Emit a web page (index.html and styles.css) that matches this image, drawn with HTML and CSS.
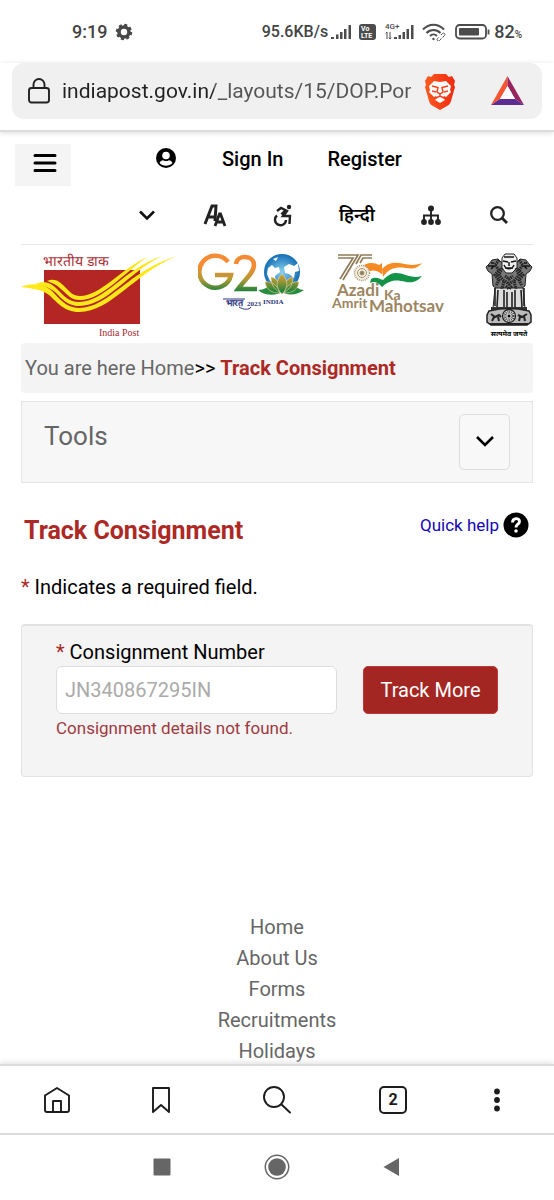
FILE: index.html
```
<!DOCTYPE html>
<html lang="en">
<head>
<meta charset="utf-8">
<meta name="viewport" content="width=device-width, initial-scale=1">
<title>Track Consignment</title>
<link rel="stylesheet" href="styles.css">
</head>
<body>
<div class="status-bar">
  <span>9:19</span>
  <svg class="status-gear" width="18" height="18" viewBox="0 0 18 18"><circle cx="9" cy="9" r="5" fill="none" stroke="#484848" stroke-width="3.6"/><circle cx="9" cy="9" r="7" fill="none" stroke="#484848" stroke-width="2.4" stroke-dasharray="3 2.5"/></svg>
  <span class="status-speed">95.6KB/s</span>
  <svg class="status-signal" width="22" height="16" viewBox="0 0 22 16" fill="#4c4c4c"><path d="M0 13h3v2H0zM5 10.500h2.500V15H5zM9 8h2.500v7H9zM13 5h2.500v10H13zM17.500 1H20v14h-2.500z"/></svg>
  <svg class="status-volte" width="18" height="16" viewBox="0 0 18 16"><rect width="17" height="16" rx="3" fill="#4c4c4c"/><text x="2" y="7" class="volte-text">Vo</text><text x="2" y="14" class="volte-text">LTE</text></svg>
  <svg width="31" height="18" viewBox="0 0 31 18" fill="#4c4c4c"><text x="0" y="6" class="net-text">4G+</text><path d="M2 9v7M.700 10.300 2 9M5 9v7M3.800 14.700 5 16l1.300-1.300" stroke="#4c4c4c" fill="none"/><path d="M9 14h3v2H9zM13.500 12H16v4h-2.500zM17.500 9H20v7h-2.500zM21.500 6H24v10h-2.500zM26 2h2.500v14H26z"/></svg>
  <svg class="status-wifi" width="25" height="18" viewBox="0 0 25 18" fill="none" stroke="#4c4c4c" stroke-width="2"><path d="M1 6.500C7 0 16 0 22 6.500M4.500 10c4-4 10-4 14 0M8 13c2-2 5-2 7 0"/><circle cx="11.500" cy="16" r="1.200" fill="#4c4c4c" stroke="none"/><path d="m16.500 14.500-1 1a1.300 1.300 0 0 0 2 2l2-2M19 12l1.500-1.500a1.300 1.300 0 0 1 2 2l-2 2" stroke-width="1"/></svg>
  <svg width="36" height="16" viewBox="0 0 36 16"><rect x="1" y="1" width="30" height="13.500" rx="3.500" fill="none" stroke="#4c4c4c" stroke-width="1.800"/><rect x="4" y="4" width="20" height="7.500" rx="1" fill="#4c4c4c"/><path d="M33.500 5.500v5" stroke="#4c4c4c" stroke-width="1.800"/></svg>
  <span class="status-battery">82<small>%</small></span>
</div>

<div class="browser-bar">
  <div class="address">
    <svg width="22" height="26" viewBox="0 0 22 26" fill="none" stroke="#222" stroke-width="1.900"><rect x="1" y="10" width="20" height="14.500" rx="2.500"/><path d="M5.500 10V6.500a5.500 5.500 0 0 1 11 0V10"/></svg>
    <input class="address-input" type="text" aria-label="Address" value="indiapost.gov.in/_layouts/15/DOP.Por">
    <button class="icon-button" type="button" aria-label="Brave Shields">
      <svg width="32" height="37" viewBox="0 0 32 37"><defs><linearGradient id="lion" x1="0" x2="1"><stop offset="0" stop-color="#ff5a1e"/><stop offset="1" stop-color="#f02a12"/></linearGradient></defs><path fill="url(#lion)" d="m10 1-3 3-3-1-3 5 1 4-1 2 4 14c1 3 2 4 4 5l7 4 7-4c2-1 3-2 4-5l4-14-1-2 1-4-3-5-3 1-3-3z"/><path fill="#fff" d="m10 8 6 1 6-1 5 5-1 4 1 2-5 5-2-1-1 2 2 2-5 3-5-3 2-2-1-2-2 1-5-5 1-2-1-4z"/><path fill="none" stroke="#f9401a" stroke-width="1.500" d="m8 13 6 1.500-1 4.500 3 2 3-2-1-4.500 6-1.500M8 18l4 1M24 18l-4 1M16 21v3M12 25l4-2 4 2"/></svg>
    </button>
    <button class="icon-button" type="button" aria-label="Brave Rewards">
      <svg width="33" height="30" viewBox="0 0 33 30"><path fill="#fa5532" d="M16.500 0 0 29l9-6 7.500-13z"/><path fill="#97235f" d="m16.500 0 16.500 29-9-6-7.500-13z"/><path fill="#5b2d93" d="M0 29h33l-9-6H9z"/><path fill="#fff" d="m16.500 10 7.500 13H9z"/></svg>
    </button>
  </div>
</div>

<div class="page">
  <header class="site-header">
    <button class="menu-button" type="button" aria-label="Menu"><svg width="24" height="20" viewBox="0 0 24 20"><path d="M2 2.500h20M2 10h20M2 17.500h20" stroke="#000" stroke-width="3" stroke-linecap="round"/></svg></button>
    <div class="header-rows">
      <nav class="account-row" aria-label="Account">
        <svg width="24" height="24" viewBox="0 0 24 24"><circle cx="12" cy="11" r="10"/><circle cx="12" cy="8.500" r="3.800" fill="#fff"/><path fill="#fff" d="M5.500 16c1-2 3-3 4-2.500 2 .700 3 .700 5 0 1-.500 3 .500 4 2.500-3.500 3.600-9.500 3.600-13 0z"/></svg>
        <a href="#">Sign In</a>
        <a href="#">Register</a>
      </nav>
      <nav class="tool-row" aria-label="Page tools">
        <button class="icon-button" type="button" aria-label="More"><svg width="24" height="24" viewBox="0 0 24 24"><path d="m5 8.500 7 7 7-7" fill="none" stroke="#111" stroke-width="2.600"/></svg></button>
        <button class="icon-button" type="button" aria-label="Text size"><svg width="24" height="24" viewBox="0 0 24 24" fill="none" stroke="#222" stroke-width="3"><path d="M2 21 9 3h4l-1 15M6 14h6"/><path d="m12 23 4.500-12h1L22 23M14 19h7" stroke-width="2.800"/></svg></button>
        <button class="icon-button" type="button" aria-label="Accessibility"><svg width="24" height="24" viewBox="0 0 24 24" fill="none" stroke="#222" stroke-width="2.400"><circle cx="18" cy="4" r="2.200" fill="#222" stroke="none"/><path d="m6 8 4-3 6 3-4 5h7l-.500 8"/><path d="M6 12.500a5.500 5.500 0 1 0 9 4.500"/><path d="m15 8-4 4" stroke-width="4"/></svg></button>
        <a class="language" href="#" lang="hi">हिन्दी</a>
        <button class="icon-button" type="button" aria-label="Sitemap"><svg width="24" height="24" viewBox="0 0 24 24" fill="#222"><circle cx="12" cy="5.500" r="3"/><circle cx="5" cy="19" r="2.900"/><circle cx="12" cy="19" r="2.900"/><circle cx="19" cy="19" r="2.900"/><path d="M12 6v12M5 18v-5.500h14V18" fill="none" stroke="#222" stroke-width="1.900"/></svg></button>
        <button class="icon-button" type="button" aria-label="Search"><svg width="24" height="24" viewBox="0 0 24 24" fill="none" stroke="#222" stroke-width="2.300"><circle cx="10.500" cy="10.500" r="6.300"/><path d="m15 15 5 5" stroke-width="2.900"/></svg></button>
      </nav>
    </div>
  </header>

  <main class="content">
    <div class="logos">
      <svg width="157" height="90" viewBox="0 0 157 90" role="img" aria-label="India Post">
        <path fill="#b32623" d="M23 20h96v54H23z"/>
        <text class="post-hindi" x="22" y="16" lang="hi">भारतीय डाक</text>
        <text class="post-name" x="78" y="86">India Post</text>
        <g fill="#ffe81a"><path d="M0 37C10 33 22 33 30 40c8 8 15 18 28 18 30 0 50-38 98-52-44 18-66 56-98 56-15 0-22-10-30-17-8-6-20-7-28-8z"/><path d="M14 34c10-4 16-1 22 5 7 7 12 13 22 13 26 0 46-34 83-46-33 16-55 50-83 50-11 0-17-7-24-14-7-6-14-6-20-8z"/><path d="M26 31c8-3 12 0 18 6 5 5 8 9 15 9 21 0 41-28 68-39-23 14-45 43-68 43-9 0-12-5-18-10-6-6-10-7-15-9z"/></g>
      </svg>
      <svg width="114" height="90" viewBox="0 0 114 90" role="img" aria-label="G20 Bharat 2023 India">
        <defs><linearGradient id="tri" gradientUnits="userSpaceOnUse" x1="0" y1="5" x2="0" y2="42"><stop offset=".3" stop-color="#f58b32"/><stop offset=".65" stop-color="#b59a35"/><stop offset="1" stop-color="#16813c"/></linearGradient><radialGradient id="globe"><stop offset="0" stop-color="#8bd1f0"/><stop offset="1" stop-color="#136fb5"/></radialGradient></defs>
        <g fill="none" stroke="url(#tri)" stroke-width="4.500"><path d="M30 12A16 16 0 1 0 33 25H17"/><path d="M38 14C39 4 56 5 56 15c0 8-9 14-16 24h19"/></g>
        <circle cx="84" cy="22" r="18" fill="url(#globe)"/>
        <path fill="#fff" d="m70 18 4-3 3 3 4-1 1 5-5 4 1 8-6-3-3-7zM86 17l5-3 5 2 4-3 1 8-4 1-1 6-5-4-4-1zM75 9l5-2-2 4z"/>
        <path fill="#278c3d" d="M60 40c7 0 10-4 13-4l11 8 11-8c3 0 6 4 11 4-8 6-18 5-22 2-6 4-17 4-24-2z"/>
        <g fill="url(#tri)" stroke="#f1d9a6" stroke-width=".6"><path d="M67 32c6-1 12 2 15 11-8 0-14-3-15-11zM101 32c-6-1-12 2-15 11 8 0 14-3 15-11zM73 27c6 1 10 7 11 16-7-2-11-8-11-16zM95 27c-6 1-10 7-11 16 7-2 11-8 11-16z"/><path d="M84 24c7 7 6 14 0 20-6-6-7-13 0-20z"/></g>
        <text class="g20-hindi" x="28" y="56" lang="hi">भारत</text>
        <path d="M25 49h22M41 57c5 3 10 3 12 0" fill="none" stroke="#28357d"/>
        <text class="g20-text" x="49" y="56">2023</text><text class="g20-text" x="65" y="54">INDIA</text>
      </svg>
      <svg width="133" height="90" viewBox="0 0 133 90" role="img" aria-label="75 Azadi Ka Amrit Mahotsav">
        <g fill="none" stroke="#8f7b58" stroke-width="1.700"><path d="M6 5h20L11 30M6 8h15L8 29M40 5H29l-5 9M40 8h-9l-3 5"/></g>
        <path fill="#f68b24" d="M32 15c6-3 11-2 15 0l3-2v12c-4-5-9-5-12-4zM50 19c14-14 23 1 40-6-5 6-10 6-16 5-9-1-16-1-23 9z"/>
        <path fill="#fff" d="m38 21 12 3V33l-11-4z"/>
        <path fill="#139347" d="M39 29c5-3 9 0 12 1 15-16 23 1 39-4-5 6-10 7-16 6-9-2-15-3-24 5-4-5-8-6-12-4z"/>
        <g fill="#f6f0e1" stroke="#a39373"><circle cx="30" cy="23" r="7.500" stroke-dasharray="1 1" stroke-width="1.500"/><circle cx="30" cy="23" r="4.500"/><circle cx="30" cy="23" r="2" fill="#8f7b58"/></g>
        <text class="azadi" x="5" y="46">Azadi</text><text class="azadi azadi-small" x="52" y="50">Ka</text><text class="azadi azadi-small" x="0" y="58">Amrit</text><text class="azadi" x="37" y="62">Mahotsav</text>
      </svg>
      <svg width="48" height="90" viewBox="0 0 48 90" role="img" aria-label="State Emblem of India">
        <g fill="#777" stroke="#222"><path d="m16 12-3-3-6 1-3 4-3 3 2 4 4 3 1 12 8 6h16l8-6 1-12 4-3 2-4-3-3-3-4-6-1-3 3z"/><path fill="#eee" d="m17 8 3-4h9l3 4v10l-5 5h-6l-4-5z"/><path fill="#ddd" d="M10 38h28l2 20H8z"/></g>
        <path d="m14 10-4 5 4 5-4 5 4 5-3 6M34 10l4 5-4 5 4 5-4 5 3 6M17 18l-3 7 5 6-2 8M31 18l3 7-5 6 2 8M20 26l4 3 4-3M20 31l4 3 4-3M21 36l3 3 3-3" fill="none" stroke="#222" stroke-width="3" stroke-dasharray="1.500 .8"/>
        <path d="M19 7h10M18 11l5 1M26 12l5-1M24 12v4M20 18h8M19 15c2 5 8 5 10 0M3 16h6l-3 3M45 16h-6l3 3M6 13h3M42 13h-3" stroke="#151515" fill="none" stroke-width="1.500"/>
        <path d="M10 38v18M13 40l-1 17M19 40v17M22 42v15M27 42v15M30 40v17M36 40l1 17M39 38v18" stroke="#222" fill="none" stroke-width="1.600"/>
        <path d="M6 57h36v3H6z" fill="#333"/><path d="M4 61q20-5 40 0l2 4v7l-4 3H6l-4-3v-7z" fill="#bbb" stroke="#222" stroke-width="1.500"/>
        <circle cx="24" cy="66" r="6.500" fill="#ddd" stroke="#222" stroke-width="1.300"/><circle cx="24" cy="66" r="4" fill="none" stroke="#333" stroke-width="3" stroke-dasharray=".7 1"/><circle cx="24" cy="66" r="1.500"/>
        <path d="m6 64 4 3 4-2 2 2M7 71l2-4M14 71l-1-4M33 65l4 2 5-3M34 71l1-4M40 71l-1-5M5 74h38" stroke="#222" stroke-width="2" fill="none"/>
        <text class="emblem-text" x="24" y="86" text-anchor="middle" lang="hi">सत्यमेव जयते</text>
      </svg>
    </div>

    <nav class="breadcrumb" aria-label="Breadcrumb">You are here <a href="#">Home</a><span class="separator">&gt;&gt;</span> <strong>Track Consignment</strong></nav>

    <section class="tools">
      <h2>Tools</h2>
      <button class="tools-toggle" type="button" aria-label="Expand tools"><svg width="24" height="24" viewBox="0 0 24 24"><path d="m4 7 8 8 8-8" fill="none" stroke="#000" stroke-width="2.600"/></svg></button>
    </section>

    <div class="title-row">
      <h1>Track Consignment</h1>
      <a class="help" href="#">Quick help<svg width="26" height="26" viewBox="0 0 26 26" aria-hidden="true"><circle cx="13" cy="13" r="12.500" fill="#000"/><path d="M9.500 10.500c0-5 7-5 7-1 0 3-3.500 2.500-3.500 6" fill="none" stroke="#fff" stroke-width="2.900"/><circle cx="13" cy="19" r="1.800" fill="#fff"/></svg></a>
    </div>
    <p class="required-note"><span class="star">*</span> Indicates a required field.</p>

    <form class="track-form">
      <label for="consignment"><span class="star">*</span> Consignment Number</label>
      <div class="track-row">
        <input id="consignment" type="text" placeholder="JN340867295IN">
        <button type="button">Track More</button>
      </div>
      <p class="error">Consignment details not found.</p>
    </form>

    <nav class="footer-links" aria-label="Footer">
      <a href="#">Home</a>
      <a href="#">About Us</a>
      <a href="#">Forms</a>
      <a href="#">Recruitments</a>
      <a href="#">Holidays</a>
    </nav>
  </main>
</div>

<nav class="bottom-bar" aria-label="Browser">
  <button class="icon-button" type="button" aria-label="Home"><svg width="28" height="28" viewBox="0 0 28 28" fill="none" stroke="#1c1c1c" stroke-width="1.900" stroke-linejoin="round"><path d="M2 9.500 14 2l12 7.500V24a2 2 0 0 1-2 2H4a2 2 0 0 1-2-2z"/><path d="M10 26V15h8v11"/></svg></button>
  <button class="icon-button" type="button" aria-label="Bookmarks"><svg width="28" height="28" viewBox="0 0 28 28" fill="none" stroke="#1c1c1c" stroke-width="1.900" stroke-linejoin="round"><path d="M6 2h16v24l-8-7-8 7z"/></svg></button>
  <button class="icon-button" type="button" aria-label="Search"><svg width="30" height="30" viewBox="0 0 30 30" fill="none" stroke="#1c1c1c" stroke-width="1.900" stroke-linecap="round"><circle cx="12" cy="12" r="10"/><path d="m19.500 19.500 8.500 8"/></svg></button>
  <button class="tab-count" type="button" aria-label="2 open tabs">2</button>
  <button class="icon-button" type="button" aria-label="More options"><svg width="28" height="28" viewBox="0 0 28 28" fill="#1c1c1c"><circle cx="14" cy="5.500" r="2.900"/><circle cx="14" cy="14" r="2.900"/><circle cx="14" cy="22.500" r="2.900"/></svg></button>
</nav>
<nav class="system-bar" aria-label="System">
  <button class="icon-button" type="button" aria-label="Recent apps"><svg width="26" height="26" viewBox="0 0 26 26"><rect x="4.500" y="4.500" width="17" height="17" rx="1" fill="#666"/></svg></button>
  <button class="icon-button" type="button" aria-label="Home screen"><svg width="26" height="26" viewBox="0 0 26 26"><circle cx="13" cy="13" r="11.700" fill="none" stroke="#666" stroke-width="1.500"/><circle cx="13" cy="13" r="8.800" fill="#666"/></svg></button>
  <button class="icon-button" type="button" aria-label="Back"><svg width="26" height="26" viewBox="0 0 26 26"><path d="M20 4v18L4.500 13z" fill="#666"/></svg></button>
</nav>
</body>
</html>
```
FILE: styles.css
```
* {
  box-sizing: border-box;
}

body {
  display: flex;
  flex-direction: column;
  height: 100vh;
  margin: 0;
  background: #fff;
  color: #000;
  font-family: Roboto, "Noto Sans", sans-serif;
  font-size: 18px;
  line-height: 24px;
}

a {
  color: inherit;
  text-decoration: none;
}

button,
input {
  font: inherit;
}

svg {
  display: block;
  flex: none;
}

h1,
h2,
p {
  margin: 0;
}

.icon-button {
  display: flex;
  flex: none;
  align-items: center;
  justify-content: center;
  padding: 0;
  border: 0;
  background: none;
}

.status-bar {
  display: flex;
  flex: none;
  align-items: center;
  padding: 20px 32px 19px 72px;
  color: #444;
  font-weight: 500;
}

.status-gear {
  margin-left: 8px;
}

.status-speed {
  margin-left: auto;
  font-size: 16px;
}

.status-signal {
  margin: 0 6px 0 3px;
}

.status-volte {
  margin-right: 8px;
}

.status-wifi {
  margin: 0 8px 0 6px;
}

.status-battery {
  margin-left: 3px;
}

.status-battery small {
  font-size: 10px;
  line-height: 10px;
}

.volte-text {
  fill: #fff;
  font-size: 7px;
  font-weight: 700;
}

.net-text {
  font-size: 8px;
}

.browser-bar {
  z-index: 1;
  flex: none;
  padding: 0 12px 11px;
  border-bottom: 2px solid #dcdcdc;
  background: #fff;
  box-shadow: 0 1px 5px #ddd;
}

.address {
  display: flex;
  align-items: center;
  height: 56px;
  padding: 0 18px 0 16px;
  border-radius: 12px;
  background: #f0f0f0;
}

.address-input {
  flex: 1;
  min-width: 0;
  margin: 0 13px 0 12px;
  padding: 0;
  border: 0;
  background: linear-gradient(90deg, #222 152px, #555 152px);
  background-clip: text;
  color: #333;
  font-size: 21px;
  line-height: 28px;
  -webkit-text-fill-color: transparent;
}

.address .icon-button + .icon-button {
  margin-left: 35px;
}

.page {
  flex: 1;
  min-height: 0;
  overflow: hidden;
}

.site-header {
  display: flex;
  align-items: flex-start;
  gap: 64px;
  padding: 12px 15px 0;
}

.menu-button {
  display: flex;
  align-items: center;
  justify-content: center;
  width: 56px;
  height: 42px;
  padding: 0 0 4px 4px;
  border: 0;
  background: #f4f4f4;
}

.header-rows {
  display: flex;
  flex-direction: column;
  gap: 32px;
  padding-top: 3px;
}

.account-row,
.tool-row {
  display: flex;
  align-items: center;
  gap: 44px;
  height: 24px;
}

.account-row {
  padding-left: 19px;
  font-size: 20px;
  font-weight: 500;
}

.language {
  font-weight: 600;
}

.content {
  padding: 17px 21px 0;
}

.logos {
  display: flex;
  justify-content: space-between;
  padding: 5px 0 3px;
  border-top: 1px solid #e6e6e6;
}

.post-hindi {
  fill: #a92b31;
  font-family: "Liberation Serif", serif;
  font-size: 14px;
}

.post-name {
  fill: #a92b31;
  font-family: "Liberation Serif", serif;
  font-size: 10px;
}

.g20-hindi,
.g20-text {
  fill: #28357d;
  font-family: "Liberation Serif", serif;
  font-size: 7px;
  font-weight: 700;
}

.g20-hindi {
  font-size: 9px;
}

.azadi {
  fill: #9c8561;
  font-family: Lato, sans-serif;
  font-size: 17px;
  font-weight: 700;
}

.azadi-small {
  font-size: 14px;
}

.emblem-text {
  font-size: 7px;
  font-weight: 700;
}

.breadcrumb {
  padding: 13px 4px;
  border-radius: 4px;
  background: #f4f4f4;
  color: #666;
  font-size: 20px;
}

.separator {
  color: #000;
}

.breadcrumb strong {
  color: #ac2925;
  font-weight: 700;
}

.tools {
  display: flex;
  align-items: flex-start;
  justify-content: space-between;
  margin-top: 8px;
  padding: 12px 22px;
  border: 1px solid #e4e4e4;
  background: #f7f7f7;
}

.tools h2 {
  padding-top: 6px;
  color: #666;
  font-size: 26px;
  font-weight: 400;
  line-height: 32px;
}

.tools-toggle {
  display: flex;
  align-items: center;
  justify-content: center;
  width: 51px;
  height: 56px;
  padding: 0;
  border: 1px solid #ddd;
  border-radius: 5px;
  background: #f8f8f8;
}

.title-row {
  display: flex;
  align-items: flex-start;
  justify-content: space-between;
  margin-top: 29px;
  padding: 0 4px 0 3px;
}

h1 {
  padding-top: 3px;
  color: #ac2925;
  font-size: 25px;
  font-weight: 700;
  line-height: 32px;
}

.help {
  display: flex;
  align-items: center;
  gap: 4px;
  color: #1405b4;
  font-size: 17px;
}

.required-note {
  margin-top: 28px;
  font-size: 20px;
}

.star {
  color: #ac2925;
}

.track-form {
  margin-top: 25px;
  padding: 14px 34px 36px;
  border: 1px solid #e2e2e2;
  border-top-width: 2px;
  border-radius: 4px;
  background: #f4f4f4;
}

.track-form label {
  display: block;
  font-size: 20px;
}

.track-row {
  display: flex;
  gap: 26px;
  margin-top: 2px;
}

.track-row input {
  flex: 1;
  min-width: 0;
  height: 48px;
  padding: 0 8px;
  border: 1px solid #ddd;
  border-radius: 6px;
  background: #fff;
  font-size: 20px;
}

.track-row input::placeholder {
  color: #aaa;
  opacity: 1;
}

.track-row button {
  width: 135px;
  height: 48px;
  padding: 0;
  border: 1px solid #c0393a;
  border-radius: 5px;
  background: #a42623;
  color: #fff;
  font-size: 20px;
}

.error {
  margin-top: 2px;
  color: #a0393f;
  font-size: 17px;
}

.footer-links {
  display: flex;
  flex-direction: column;
  align-items: center;
  margin-top: 135px;
  color: #666;
  font-size: 20px;
  line-height: 31px;
}

.bottom-bar {
  z-index: 1;
  display: grid;
  flex: none;
  grid-template-columns: 114fr 94fr 138fr 94fr 114fr;
  align-items: center;
  justify-items: center;
  height: 71px;
  border-top: 2px solid #dcdcdc;
  border-bottom: 2px solid #dcdcdc;
  background: #fff;
  box-shadow: 0 -1px 6px #ddd;
}

.tab-count {
  width: 28px;
  height: 28px;
  padding: 0;
  border: 2px solid #1c1c1c;
  border-radius: 5px;
  background: #fff;
  color: #1c1c1c;
  font-size: 16px;
  font-weight: 700;
  line-height: 24px;
}

.system-bar {
  z-index: 1;
  display: flex;
  flex: none;
  justify-content: center;
  gap: 89px;
  padding: 19px 0 20px;
  background: #fff;
}
```
